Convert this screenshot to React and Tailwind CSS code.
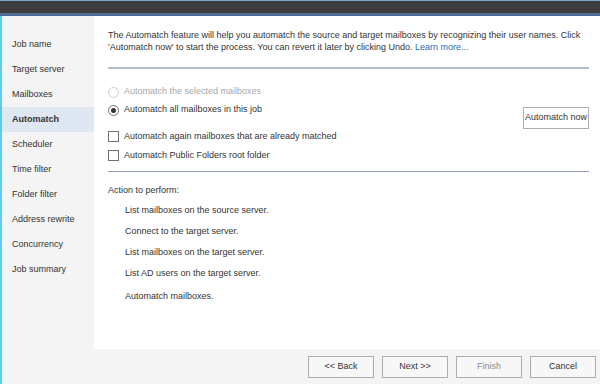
import { useState } from "react";

const steps = [
  "Job name",
  "Target server",
  "Mailboxes",
  "Automatch",
  "Scheduler",
  "Time filter",
  "Folder filter",
  "Address rewrite",
  "Concurrency",
  "Job summary",
];

const actions = [
  "List mailboxes on the source server.",
  "Connect to the target server.",
  "List mailboxes on the target server.",
  "List AD users on the target server.",
  "Automatch mailboxes.",
];

const Radio = ({ checked, disabled }) => (
  <span
    className={`w-[11px] h-[11px] rounded-full border flex items-center justify-center bg-white ${
      disabled ? "border-[#cfcfcf]" : "border-[#707070]"
    }`}
  >
    {checked && <span className="w-[5px] h-[5px] rounded-full bg-[#333]" />}
  </span>
);

const Check = () => (
  <span className="w-[11px] h-[11px] border border-[#707070] bg-white" />
);

const App = () => {
  const [active] = useState("Automatch");

  return (
    <div
      className="w-[600px] h-[384px] flex flex-col bg-[#f4f4f4] text-[#333] text-[9px] overflow-hidden"
      style={{ fontFamily: "'Liberation Sans', Arial, sans-serif" }}
    >
      {/* Title bar */}
      <div className="h-[13px] bg-[#3e3e3e] border-t border-[#7aa7c7] shrink-0" />
      <div className="h-[3px] bg-[#4f6d96] shrink-0" />

      <div className="flex flex-1 border-l-2 border-[#5ccaf5] min-h-0">
        <div className="flex flex-col flex-1 min-w-0">
          <div className="flex flex-1 min-h-0">
            {/* Sidebar */}
            <div className="w-[92px] shrink-0 pt-[16px]">
              {steps.map((s) => (
                <div
                  key={s}
                  className={`h-[25px] flex items-center pl-[10px] ${
                    s === active ? "bg-[#dfe7f2] font-bold" : ""
                  }`}
                >
                  {s}
                </div>
              ))}
            </div>

            {/* Content */}
            <div className="flex-1 bg-white pl-[14px] pr-[11px] pt-[13px]">
              <p className="leading-[12px]">
                The Automatch feature will help you automatch the source and target mailboxes by
                recognizing their user names. Click 'Automatch now' to start the process. You can
                revert it later by clicking Undo. <span className="text-[#2b6cb0]">Learn more...</span>
              </p>
              <div className="h-[2px] bg-[#b3bfd0] mt-[14px]" />

              <div className="flex justify-between mt-[14px]">
                <div className="flex flex-col">
                  <label className="flex items-center gap-[5px] h-[18px] text-[#a8a8a8]">
                    <Radio disabled />
                    Automatch the selected mailboxes
                  </label>
                  <label className="flex items-center gap-[5px] h-[18px]">
                    <Radio checked />
                    Automatch all mailboxes in this job
                  </label>
                  <label className="flex items-center gap-[5px] h-[19px] mt-[8px]">
                    <Check />
                    Automatch again mailboxes that are already matched
                  </label>
                  <label className="flex items-center gap-[5px] h-[19px]">
                    <Check />
                    Automatch Public Folders root folder
                  </label>
                </div>
                <button className="self-start h-[22px] w-[66px] mt-[24px] border border-[#adadad] bg-white text-[9px] text-[#333]">
                  Automatch now
                </button>
              </div>
              <div className="h-[1px] bg-[#8e9aaf] mt-[6px]" />

              <div className="mt-[12px] leading-[12px]">Action to perform:</div>
              <div className="pl-[17px] mt-[8px] flex flex-col gap-[9px]">
                {actions.map((a, i) => (
                  <div key={a} className={`leading-[12px] ${i === 4 ? "mt-[2px]" : ""}`}>
                    {a}
                  </div>
                ))}
              </div>
            </div>
          </div>

          {/* Footer */}
          <div className="h-[35px] shrink-0 flex items-center justify-end gap-[8px] pr-[4px]">
            {["<< Back", "Next >>", "Finish", "Cancel"].map((b) => (
              <button
                key={b}
                className={`w-[66px] h-[22px] border border-[#adadad] bg-[#f7f7f7] ${
                  b === "Finish" ? "text-[#8a8a8a]" : "text-[#333]"
                }`}
              >
                {b}
              </button>
            ))}
          </div>
        </div>
      </div>
    </div>
  );
};

export default App;
